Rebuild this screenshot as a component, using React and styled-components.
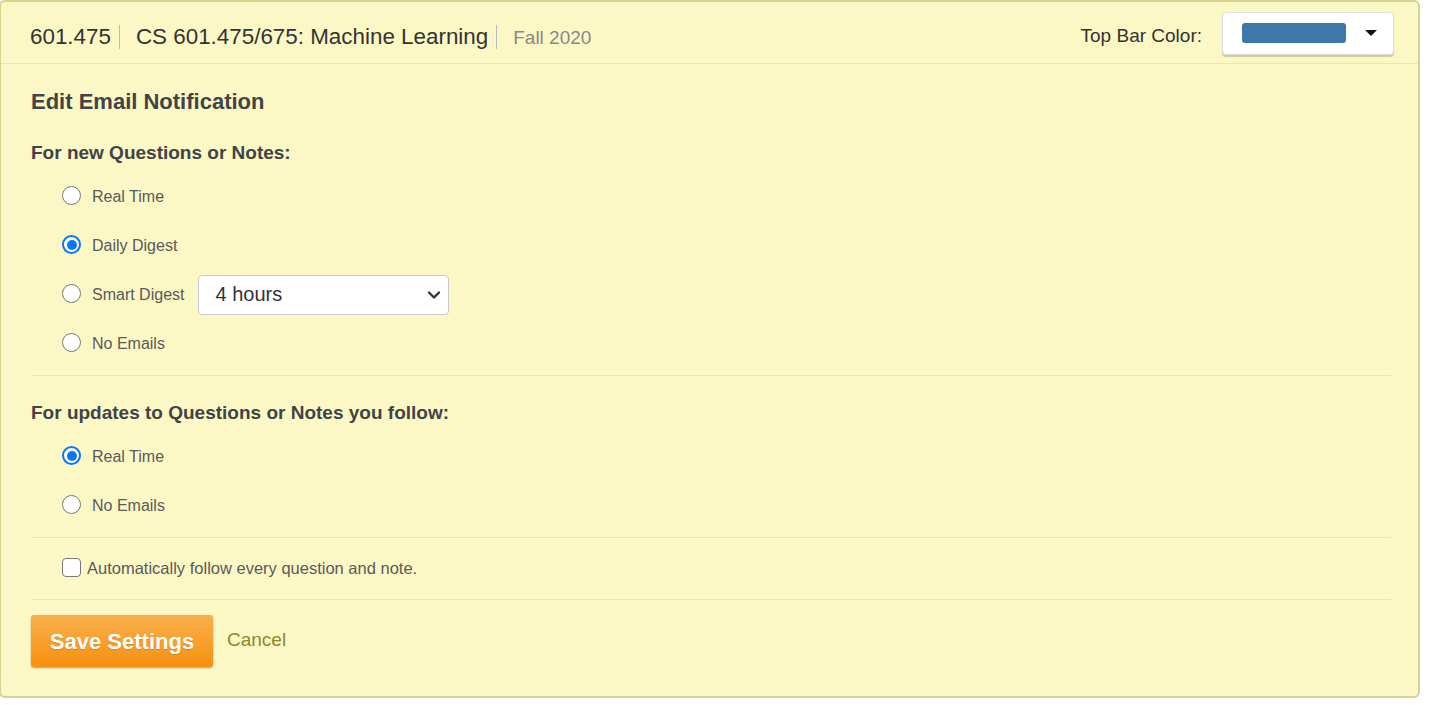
import React from 'react'
import styled, { createGlobalStyle } from 'styled-components'

const GlobalStyle = createGlobalStyle`
    body {
        margin: 0;
        background: #ffffff;
        font-family: 'Liberation Sans', Arial, sans-serif;
    }
`

const Panel = styled.div`
    box-sizing: border-box;
    width: 1421px;
    height: 698px;
    margin-left: -1px;
    background-color: #fcf8c5;
    border: 2px solid #d6d48e;
    border-radius: 6px;
    display: flex;
    flex-direction: column;
`

const Header = styled.header`
    display: flex;
    align-items: center;
    height: 61px;
    padding: 0 24px 0 29px;
    border-bottom: 1.5px solid #ece7a6;
    color: #333;
`

const Crumb = styled.span`
    font-size: ${p => p.small ? '19px' : '22.4px'};
    color: ${p => p.small ? '#888' : '#333'};
    padding: 0 ${p => p.last ? 0 : 8}px 0 ${p => p.first ? 0 : 16}px;
    line-height: 24px;
    border-right: ${p => p.last ? 'none' : '1.5px solid #bbb'};
    margin-top: ${p => p.small ? '10px' : '8px'};
`

const Spacer = styled.div`
    flex: 1;
`

const BarLabel = styled.span`
    font-size: 19px;
    color: #333;
    margin-right: 20px;
    margin-top: 6px;
`

const ColorPicker = styled.div`
    box-sizing: border-box;
    width: 172px;
    height: 43px;
    background: #fff;
    border: 1px solid #ddd;
    border-radius: 4px;
    box-shadow: 0 2px 1px rgba(0, 0, 0, 0.18);
    display: flex;
    align-items: center;
    padding: 0 16px 0 19px;
    margin-top: 1px;
`

const Swatch = styled.div`
    width: 104px;
    height: 20px;
    border-radius: 3px;
    background: #3e78ab;
`

const Body = styled.div`
    padding: 25px 27px 0 30px;
    display: flex;
    flex-direction: column;
`

const Title = styled.h2`
    margin: 0;
    font-size: 22px;
    line-height: 26px;
    font-weight: bold;
    color: #404347;
`

const SubTitle = styled.h3`
    margin: ${p => p.top}px 0 8px;
    font-size: 19px;
    line-height: 22px;
    font-weight: bold;
    color: #404347;
`

const Option = styled.label`
    display: flex;
    align-items: center;
    height: 49px;
    padding-left: 31px;
    font-size: 16px;
    color: #5a5a5a;
`

const Radio = styled.span`
    box-sizing: border-box;
    width: 19px;
    height: 19px;
    border-radius: 50%;
    margin-right: 11px;
    background: #fff;
    border: ${p => p.checked ? '2.5px solid #0b77f5' : '1.5px solid #777'};
    display: flex;
    align-items: center;
    justify-content: center;
    margin-top: -2px;

    &::after {
        content: '';
        display: ${p => p.checked ? 'block' : 'none'};
        width: 10px;
        height: 10px;
        border-radius: 50%;
        background: #0b77f5;
    }
`

const Select = styled.div`
    box-sizing: border-box;
    width: 251px;
    height: 40px;
    margin-left: 14px;
    background: #fff;
    border: 1.5px solid #c9c9c9;
    border-radius: 4px;
    display: flex;
    align-items: center;
    justify-content: space-between;
    padding: 0 6px 0 16px;
    font-size: 20px;
    color: #333;
`

const Divider = styled.hr`
    border: none;
    border-top: 1.5px solid #ece7a6;
    margin: ${p => p.top}px 0 0;
    width: 100%;
`

const CheckRow = styled.label`
    display: flex;
    align-items: center;
    height: 20px;
    padding: 20px 0 21px 31px;
    font-size: 16.5px;
    color: #5a5a5a;
`

const Checkbox = styled.span`
    box-sizing: border-box;
    width: 19px;
    height: 19px;
    border: 1.5px solid #777;
    border-radius: 4px;
    background: #fff;
    margin-right: 6px;
    margin-top: -2px;
`

const Actions = styled.div`
    display: flex;
    align-items: center;
    padding-top: 15px;
`

const SaveButton = styled.button`
    width: 182px;
    height: 52px;
    border: none;
    border-radius: 3px;
    background: linear-gradient(to bottom, #f9b04d, #f7900e);
    box-shadow: 0 1px 2px rgba(0, 0, 0, 0.35);
    color: #fff;
    font-family: 'Liberation Sans', Arial, sans-serif;
    font-size: 22px;
    font-weight: bold;
    text-shadow: 0 1px 1px rgba(0, 0, 0, 0.15);
    padding: 2px 0 0;
`

const CancelLink = styled.a`
    margin-left: 14px;
    font-size: 19px;
    color: #8a892c;
    margin-top: -2px;
`

function Chevron() {
    return (
        <svg width="16" height="16" viewBox="0 0 16 16">
            <path d="M3 5.5 L8 10.5 L13 5.5" fill="none" stroke="#333" strokeWidth="2.4" strokeLinecap="round" strokeLinejoin="round" />
        </svg>
    )
}

function Caret() {
    return (
        <svg width="12" height="8" viewBox="0 0 12 8">
            <path d="M0 1 L12 1 L6 7 Z" fill="#111" />
        </svg>
    )
}

const novasOpcoes = [
    { nome: 'Real Time' },
    { nome: 'Daily Digest', marcado: true },
    { nome: 'Smart Digest', select: true },
    { nome: 'No Emails' },
]

const seguirOpcoes = [
    { nome: 'Real Time', marcado: true },
    { nome: 'No Emails' },
]

function Opcao(props) {
    return (
        <Option>
            <Radio checked={props.marcado} />
            {props.nome}
            {props.select &&
                <Select>
                    4 hours
                    <Chevron />
                </Select>}
        </Option>
    )
}

export default function App() {
    return (
        <>
            <GlobalStyle />
            <Panel>
                <Header>
                    <Crumb first>601.475</Crumb>
                    <Crumb>CS 601.475/675: Machine Learning</Crumb>
                    <Crumb small last>Fall 2020</Crumb>
                    <Spacer />
                    <BarLabel>Top Bar Color:</BarLabel>
                    <ColorPicker>
                        <Swatch />
                        <Spacer />
                        <Caret />
                    </ColorPicker>
                </Header>

                <Body>
                    <Title>Edit Email Notification</Title>

                    <SubTitle top={27}>For new Questions or Notes:</SubTitle>
                    {novasOpcoes.map(o => <Opcao key={o.nome} {...o} />)}
                    <Divider top={7} />

                    <SubTitle top={26}>For updates to Questions or Notes you follow:</SubTitle>
                    {seguirOpcoes.map(o => <Opcao key={o.nome} {...o} />)}
                    <Divider top={7} />

                    <CheckRow>
                        <Checkbox />
                        Automatically follow every question and note.
                    </CheckRow>
                    <Divider top={0} />

                    <Actions>
                        <SaveButton>Save Settings</SaveButton>
                        <CancelLink>Cancel</CancelLink>
                    </Actions>
                </Body>
            </Panel>
        </>
    )
}
